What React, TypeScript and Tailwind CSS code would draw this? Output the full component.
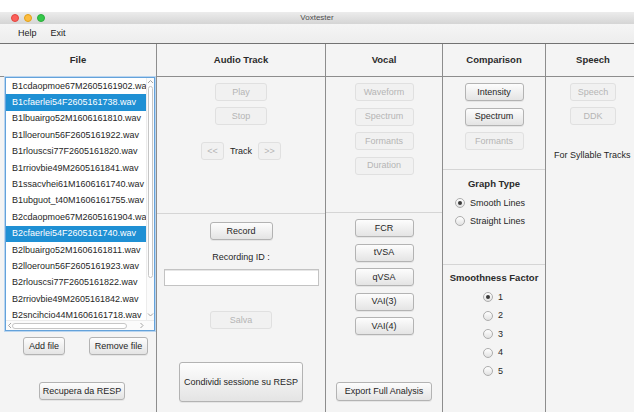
import React from "react";
import clsx from "clsx";

const FILES = [
  "B1cdaopmoe67M2605161902.wav",
  "B1cfaerlei54F2605161738.wav",
  "B1lbuairgo52M1606161810.wav",
  "B1lloeroun56F2605161922.wav",
  "B1rlouscsi77F2605161820.wav",
  "B1rriovbie49M2605161841.wav",
  "B1ssacvhei61M1606161740.wav",
  "B1ubguot_t40M1606161755.wav",
  "B2cdaopmoe67M2605161904.wav",
  "B2cfaerlei54F2605161740.wav",
  "B2lbuairgo52M1606161811.wav",
  "B2lloeroun56F2605161923.wav",
  "B2rlouscsi77F2605161822.wav",
  "B2rriovbie49M2605161842.wav",
  "B2sncihcio44M1606161718.wav",
];

const SELECTED = new Set([1, 9]);

function Btn({
  children,
  disabled,
  className,
}: {
  children: React.ReactNode;
  disabled?: boolean;
  className?: string;
}) {
  return (
    <div
      className={clsx(
        "flex shrink-0 items-center justify-center rounded-[3px] border text-[9px] leading-none whitespace-nowrap",
        disabled
          ? "border-[#e0e0e0] bg-[#f1f1f1] text-[#b5b5b5]"
          : "border-[#b3b3b3] bg-gradient-to-b from-[#fdfdfd] to-[#e4e4e4] text-[#262626] shadow-[0_1px_0_rgba(0,0,0,0.06)]",
        className
      )}
    >
      {children}
    </div>
  );
}

function Radio({ checked, label }: { checked?: boolean; label: string }) {
  return (
    <div className="flex h-[10px] items-center gap-[5px]">
      <span className="flex h-[10px] w-[10px] items-center justify-center rounded-full border border-[#adadad] bg-gradient-to-b from-[#ffffff] to-[#e2e2e2]">
        {checked && <span className="h-[4px] w-[4px] rounded-full bg-[#3a3a3a]" />}
      </span>
      <span className="text-[9px] leading-none text-[#262626]">{label}</span>
    </div>
  );
}

function Chevron({ dir }: { dir: "up" | "down" | "left" | "right" }) {
  const d = {
    up: "M1 4 L3.5 1.5 L6 4",
    down: "M1 1.5 L3.5 4 L6 1.5",
    left: "M4 1 L1.5 3.5 L4 6",
    right: "M1.5 1 L4 3.5 L1.5 6",
  }[dir];
  const vertical = dir === "up" || dir === "down";
  return (
    <svg
      width={vertical ? 7 : 6}
      height={vertical ? 6 : 7}
      viewBox={vertical ? "0 0 7 6" : "0 0 6 7"}
      fill="none"
      stroke="#9a9a9a"
      strokeWidth="0.9"
    >
      <path d={d} />
    </svg>
  );
}

function Header({ title }: { title: string }) {
  return (
    <div className="flex h-[33px] shrink-0 items-center justify-center border-b border-[#8d8d8d] bg-[#f4f4f4] text-[9.5px] font-bold text-[#2b2b2b]">
      {title}
    </div>
  );
}

function FileList() {
  return (
    <div className="relative ml-[5px] h-[254px] w-[150px] shrink-0 overflow-hidden border border-[#64a2da] bg-white shadow-[0_0_0_1px_#b9d5f0]">
      <div className="absolute top-0 right-[8px] bottom-[10px] left-0 overflow-hidden">
        {FILES.map((f, i) => (
          <div
            key={f}
            className={clsx(
              "flex h-[16.4px] items-center whitespace-nowrap pl-[6px] text-[9px] leading-none",
              SELECTED.has(i) ? "bg-[#1f90d4] text-white" : "text-[#262626]"
            )}
          >
            {f}
          </div>
        ))}
      </div>
      {/* vertical scrollbar */}
      <div className="absolute top-0 right-0 bottom-[10px] w-[8px] border-l border-[#ececec] bg-[#fbfbfb]">
        <div className="absolute top-[1px] left-0 flex w-full justify-center">
          <Chevron dir="up" />
        </div>
        <div className="absolute top-[8px] left-[1px] h-[192px] w-[5px] rounded-full border border-[#c6c6c6] bg-white" />
        <div className="absolute bottom-[2px] left-0 flex w-full justify-center">
          <Chevron dir="down" />
        </div>
      </div>
      {/* horizontal scrollbar */}
      <div className="absolute right-0 bottom-0 left-0 h-[10px] border-t border-[#ececec] bg-[#fbfbfb]">
        <div className="absolute top-[1px] left-[1px]">
          <Chevron dir="left" />
        </div>
        <div className="absolute top-[2px] left-[6px] h-[6px] w-[115px] rounded-full border border-[#c6c6c6] bg-white" />
        <div className="absolute top-[1px] left-[133px]">
          <Chevron dir="right" />
        </div>
      </div>
    </div>
  );
}

export default function App() {
  return (
    <div className="flex h-[412px] w-[634px] flex-col overflow-hidden bg-white font-['Liberation_Sans',Arial,sans-serif] text-[#262626]">
      <div className="h-[12px] shrink-0 bg-white" />
      {/* title bar */}
      <div className="relative flex h-[12px] shrink-0 items-center justify-center bg-gradient-to-b from-[#ececec] to-[#d5d5d5]">
        <div className="absolute top-[2px] left-[11px] flex gap-[5px]">
          <span className="h-[8px] w-[8px] rounded-full bg-[#fc605b] border border-[#e2463f]" />
          <span className="h-[8px] w-[8px] rounded-full bg-[#fdbc40] border border-[#e1a116]" />
          <span className="h-[8px] w-[8px] rounded-full bg-[#34c84a] border border-[#2aac3b]" />
        </div>
        <span className="text-[8px] leading-none text-[#4d4d4d]">Voxtester</span>
      </div>
      {/* menu bar */}
      <div className="flex h-[19px] shrink-0 items-center gap-[14px] bg-gradient-to-b from-[#f5f5f5] to-[#ededed] pl-[18px] text-[9px] text-[#222]">
        <span>Help</span>
        <span>Exit</span>
      </div>
      {/* main columns */}
      <div className="flex min-h-0 flex-1 border-t border-[#727272] bg-[#f4f4f4]">
        {/* File */}
        <div className="flex w-[157px] shrink-0 flex-col border-r border-[#8d8d8d]">
          <Header title="File" />
          <FileList />
          <div className="mt-[6px] flex pl-[23px]">
            <Btn className="h-[18px] w-[42px]">Add file</Btn>
            <Btn className="ml-[24px] h-[18px] w-[59px]">Remove file</Btn>
          </div>
          <div className="mt-[27px] pl-[39px]">
            <Btn className="h-[18px] w-[86px]">Recupera da RESP</Btn>
          </div>
        </div>

        {/* Audio Track */}
        <div className="flex w-[169px] shrink-0 flex-col border-r border-[#8d8d8d]">
          <Header title="Audio Track" />
          <div className="flex h-[137px] shrink-0 flex-col items-center border-b border-[#d5d5d5] pt-[6px]">
            <Btn disabled className="h-[18px] w-[52px]">Play</Btn>
            <Btn disabled className="mt-[6px] h-[18px] w-[52px]">Stop</Btn>
            <div className="mt-[17px] flex items-center">
              <Btn disabled className="h-[18px] w-[23px]">&lt;&lt;</Btn>
              <span className="mx-[6px] text-[9px] leading-none text-[#262626]">Track</span>
              <Btn disabled className="h-[18px] w-[23px]">&gt;&gt;</Btn>
            </div>
          </div>
          <div className="flex flex-col items-center pt-[8px]">
            <Btn className="h-[18px] w-[63px]">Record</Btn>
            <div className="mt-[11px] h-[12px] text-[9px] leading-[12px] text-[#262626]">Recording ID :</div>
            <div className="mt-[6px] h-[17px] w-[155px] border border-[#c3c3c3] bg-white shadow-[inset_0_1px_0_#e6e6e6]" />
            <Btn disabled className="mt-[25px] h-[18px] w-[62px]">Salva</Btn>
            <Btn className="mt-[33px] h-[40px] w-[124px]">Condividi sessione su RESP</Btn>
          </div>
        </div>

        {/* Vocal */}
        <div className="flex w-[117px] shrink-0 flex-col border-r border-[#8d8d8d]">
          <Header title="Vocal" />
          <div className="flex h-[136px] shrink-0 flex-col items-center gap-[6.5px] border-b border-[#d5d5d5] pt-[6px]">
            <Btn disabled className="h-[18px] w-[59px]">Waveform</Btn>
            <Btn disabled className="h-[18px] w-[59px]">Spectrum</Btn>
            <Btn disabled className="h-[18px] w-[59px]">Formants</Btn>
            <Btn disabled className="h-[18px] w-[59px]">Duration</Btn>
          </div>
          <div className="flex flex-col items-center gap-[6.5px] pt-[6px]">
            <Btn className="h-[18px] w-[59px]">FCR</Btn>
            <Btn className="h-[18px] w-[59px]">tVSA</Btn>
            <Btn className="h-[18px] w-[59px]">qVSA</Btn>
            <Btn className="h-[18px] w-[59px]">VAI(3)</Btn>
            <Btn className="h-[18px] w-[59px]">VAI(4)</Btn>
            <Btn className="mt-[40px] h-[19px] w-[96px]">Export Full Analysis</Btn>
          </div>
        </div>

        {/* Comparison */}
        <div className="flex w-[103px] shrink-0 flex-col border-r border-[#8d8d8d]">
          <Header title="Comparison" />
          <div className="flex h-[93px] shrink-0 flex-col items-center gap-[6.5px] border-b border-[#d5d5d5] pt-[6px]">
            <Btn className="h-[18px] w-[59px]">Intensity</Btn>
            <Btn className="h-[18px] w-[59px]">Spectrum</Btn>
            <Btn disabled className="h-[18px] w-[59px]">Formants</Btn>
          </div>
          <div className="flex h-[95px] shrink-0 flex-col border-b border-[#d5d5d5] pt-[8px]">
            <div className="text-center text-[9.5px] leading-[12px] font-bold text-[#2b2b2b]">Graph Type</div>
            <div className="mt-[8px] flex flex-col gap-[8px] pl-[12px]">
              <Radio checked label="Smooth Lines" />
              <Radio label="Straight Lines" />
            </div>
          </div>
          <div className="flex flex-col pt-[7px]">
            <div className="text-center text-[9.5px] leading-[12px] font-bold text-[#2b2b2b]">Smoothness Factor</div>
            <div className="mt-[8px] flex flex-col gap-[8.5px] pl-[40px]">
              <Radio checked label="1" />
              <Radio label="2" />
              <Radio label="3" />
              <Radio label="4" />
              <Radio label="5" />
            </div>
          </div>
        </div>

        {/* Speech */}
        <div className="flex w-[94px] shrink-0 flex-col">
          <Header title="Speech" />
          <div className="flex flex-col items-center gap-[6px] pt-[6px]">
            <Btn disabled className="h-[18px] w-[46px]">Speech</Btn>
            <Btn disabled className="h-[18px] w-[46px]">DDK</Btn>
          </div>
          <div className="mt-[24px] pl-[8px] text-[9px] leading-[12px] whitespace-nowrap text-[#262626]">For Syllable Tracks</div>
        </div>
      </div>
    </div>
  );
}
